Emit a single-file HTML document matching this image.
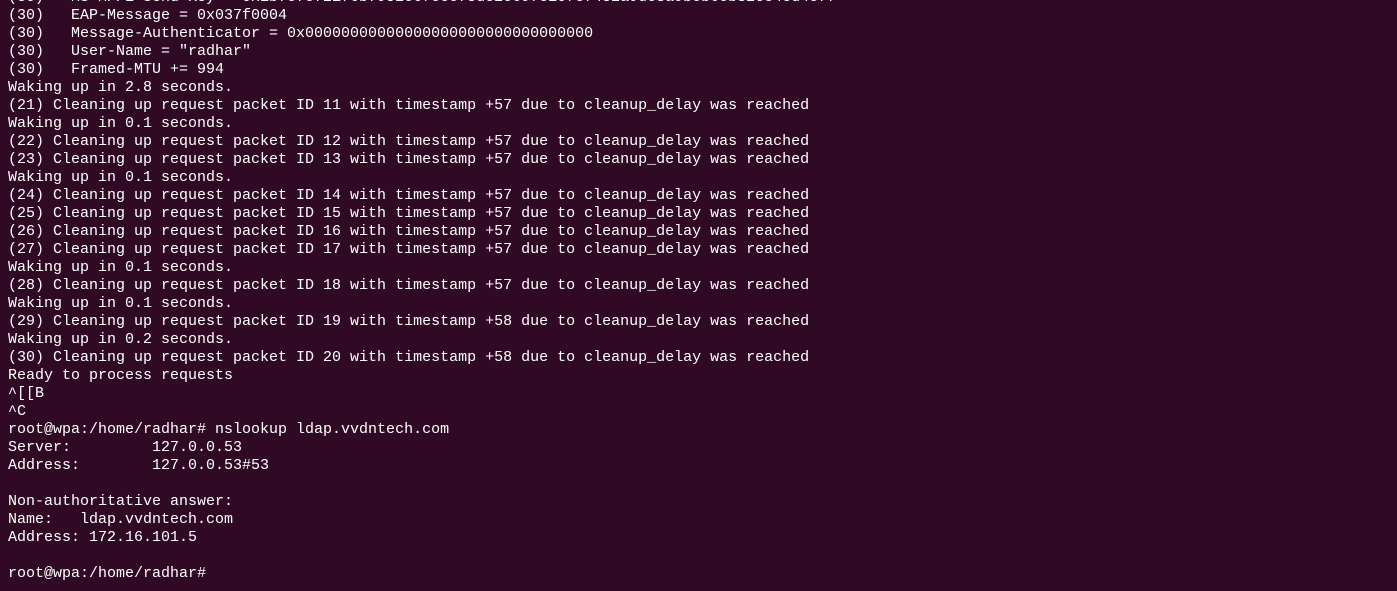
<!DOCTYPE html>
<html><head><style>
html,body{margin:0;padding:0;background:#300a24;width:1397px;height:591px;overflow:hidden}
pre{position:absolute;left:8px;top:-11px;margin:0;font-family:"Liberation Mono",monospace;font-size:15px;line-height:18px;color:#ffffff}
</style></head><body><pre>(30)   MS-MPPE-Send-Key = 0x1b7c7c721f6b795206f0ccf5dc20697310fef452a9dc8a9b0b60b82e34ed4eff
(30)   EAP-Message = 0x037f0004
(30)   Message-Authenticator = 0x00000000000000000000000000000000
(30)   User-Name = "radhar"
(30)   Framed-MTU += 994
Waking up in 2.8 seconds.
(21) Cleaning up request packet ID 11 with timestamp +57 due to cleanup_delay was reached
Waking up in 0.1 seconds.
(22) Cleaning up request packet ID 12 with timestamp +57 due to cleanup_delay was reached
(23) Cleaning up request packet ID 13 with timestamp +57 due to cleanup_delay was reached
Waking up in 0.1 seconds.
(24) Cleaning up request packet ID 14 with timestamp +57 due to cleanup_delay was reached
(25) Cleaning up request packet ID 15 with timestamp +57 due to cleanup_delay was reached
(26) Cleaning up request packet ID 16 with timestamp +57 due to cleanup_delay was reached
(27) Cleaning up request packet ID 17 with timestamp +57 due to cleanup_delay was reached
Waking up in 0.1 seconds.
(28) Cleaning up request packet ID 18 with timestamp +57 due to cleanup_delay was reached
Waking up in 0.1 seconds.
(29) Cleaning up request packet ID 19 with timestamp +58 due to cleanup_delay was reached
Waking up in 0.2 seconds.
(30) Cleaning up request packet ID 20 with timestamp +58 due to cleanup_delay was reached
Ready to process requests
^[[B
^C
root@wpa:/home/radhar# nslookup ldap.vvdntech.com
Server:         127.0.0.53
Address:        127.0.0.53#53

Non-authoritative answer:
Name:   ldap.vvdntech.com
Address: 172.16.101.5

root@wpa:/home/radhar# </pre></body></html>
